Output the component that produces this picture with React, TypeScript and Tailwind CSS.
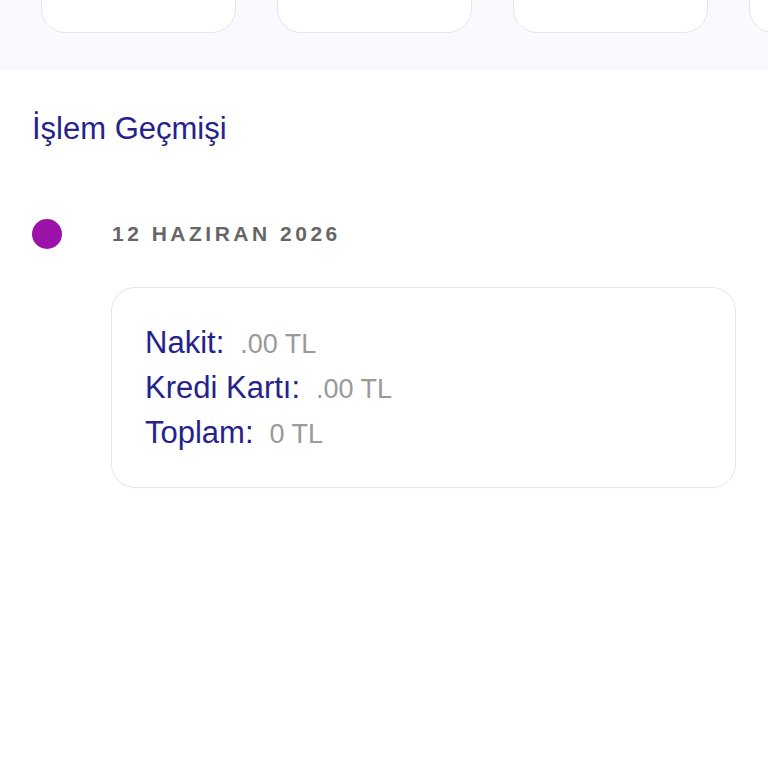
export default function App() {
  const rows = [
    { label: "Nakit:", value: ".00 TL" },
    { label: "Kredi Kartı:", value: ".00 TL" },
    { label: "Toplam:", value: "0 TL" },
  ];

  return (
    <div className="min-h-[768px] bg-white font-['Liberation_Sans',Arial,sans-serif]">
      <div className="flex h-[71px] items-end gap-[41px] overflow-hidden bg-[#faf9fd] pb-[38px] pl-[41px]">
        {[0, 1, 2, 3].map((i) => (
          <div
            key={i}
            className="h-[120px] w-[195px] shrink-0 rounded-[24px] border border-[#e6e4f0] bg-white"
          />
        ))}
      </div>

      <div className="pl-[32px] pr-[32px] pt-[40px]">
        <h2 className="text-[31px] leading-[36px] text-[#25238a]">İşlem Geçmişi</h2>

        <div className="mt-[71px] flex items-center gap-[50px]">
          <span className="h-[30px] w-[30px] shrink-0 rounded-full bg-[#9c12a9]" />
          <span className="text-[21px] font-bold tracking-[3.5px] text-[#666666]">
            12 HAZIRAN 2026
          </span>
        </div>

        <div className="ml-[79px] mt-[37px] rounded-[24px] border border-[#e6e4f2] bg-white pb-[35px] pl-[33px] pt-[37px]">
          <div className="flex flex-col gap-[8px]">
            {rows.map((r) => (
              <div key={r.label} className="flex items-baseline gap-[16px]">
                <span className="text-[31px] leading-[36px] text-[#25238a]">{r.label}</span>
                <span className="text-[27px] leading-[36px] text-[#9a9a9a]">{r.value}</span>
              </div>
            ))}
          </div>
        </div>
      </div>
    </div>
  );
}
